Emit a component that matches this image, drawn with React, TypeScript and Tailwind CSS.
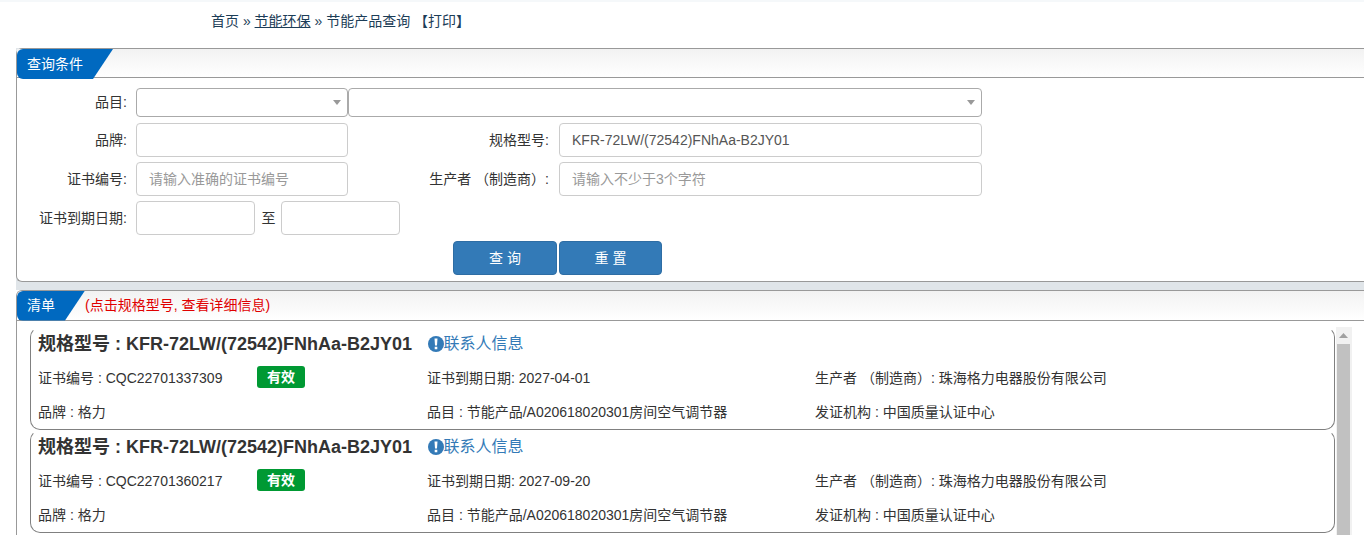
const CJK = "font-['Arial','Liberation_Sans','Noto_Sans_CJK_SC',sans-serif]";

function Arrow() {
  return (
    <svg width="8" height="5" viewBox="0 0 8 5">
      <path d="M0 0h8L4 5z" fill="#999999" />
    </svg>
  );
}

function Tab({ label, w }: { label: string; w: string }) {
  return (
    <div className={`flex items-center h-[30px] shrink-0 bg-[#0069c0] text-white text-[14px] pl-[10px] rounded-l-[6px] ${w} [clip-path:polygon(0_0,100%_0,calc(100%-20px)_100%,0_100%)]`}>
      {label}
    </div>
  );
}

function Label({ children, w = "w-[110px]" }: { children: React.ReactNode; w?: string }) {
  return <div className={`${w} shrink-0 text-right text-[14px] text-[#333] whitespace-pre`}>{children}</div>;
}

function Field({ w, value, placeholder }: { w: string; value?: string; placeholder?: string }) {
  return (
    <div className={`${w} h-[34px] shrink-0 flex items-center border border-[#ccc] rounded-[4px] bg-white px-[12px] text-[14px]`}>
      {value ? <span className="text-[#555]">{value}</span> : <span className="text-[#999]">{placeholder}</span>}
    </div>
  );
}

function Select({ w }: { w: string }) {
  return (
    <div className={`${w} h-[29px] shrink-0 flex items-center justify-end border border-[#aaa] rounded-[4px] bg-white pr-[6px]`}>
      <Arrow />
    </div>
  );
}

function Cell({ w, children }: { w: string; children: React.ReactNode }) {
  return <div className={`${w} shrink-0 flex items-center text-[14px] text-[#333] whitespace-pre`}>{children}</div>;
}

function Card({ cert, date }: { cert: string; date: string }) {
  return (
    <div className="w-[1305px] h-[103px] shrink-0 border border-[#808080] border-t-white rounded-[10px] bg-white pl-[7px]">
      <div className="flex items-center h-[33px]">
        <span className="text-[18px] font-bold text-[#333] whitespace-pre">规格型号 : KFR-72LW/(72542)FNhAa-B2JY01</span>
        <span className="flex items-center ml-[15.5px] -mt-[2px] text-[16px] text-[#337ab7]">
          <svg width="16" height="16" viewBox="0 0 16 16">
            <circle cx="8" cy="8" r="8" fill="#337ab7" />
            <path d="M6.500 2.500h3l-.5 7H7zM6.700 10.700h2.600v2.600H6.700z" fill="#fff" />
          </svg>
          联系人信息
        </span>
      </div>
      <div className="flex h-[34px] items-center">
        <Cell w="w-[219px]">证书编号 : {cert}</Cell>
        <div className="w-[48px] h-[22px] mr-[122px] mb-[2px] shrink-0 flex items-center justify-center rounded-[3px] bg-[#009933] text-white text-[14px] font-bold">有效</div>
        <Cell w="w-[388px]">证书到期日期: {date}</Cell>
        <Cell w="w-[400px]">生产者 （制造商）: 珠海格力电器股份有限公司</Cell>
      </div>
      <div className="flex h-[34px] items-center">
        <Cell w="w-[389px]">品牌 : 格力</Cell>
        <Cell w="w-[388px]">品目 : 节能产品/A020618020301房间空气调节器</Cell>
        <Cell w="w-[400px]">发证机构 : 中国质量认证中心</Cell>
      </div>
    </div>
  );
}

export default function App() {
  return (
    <div className={`w-[1364px] h-[535px] overflow-hidden bg-white ${CJK}`}>
      <div className="h-[2px] bg-[#f5f8fa]" />
      <div className="h-[46px] pl-[211px] pt-[10px] text-[14px] text-[#1c3d57] leading-[18px] whitespace-pre">
        首页 » <span className="underline">节能环保</span> » 节能产品查询 【打印】
      </div>

      <div className="ml-[16px] bg-[#e0e5e9]">
        <div className="h-[234px] border border-[#999] border-r-0 rounded-l-[6px] bg-white">
          <div className="h-[29px] border-b border-[#999] bg-gradient-to-b from-[#f2f2f2] to-white">
            <Tab label="查询条件" w="w-[96px]" />
          </div>
          <div className="pt-[10px]">
            <div className="flex items-center">
              <Label>品目:</Label>
              <div className="w-[9px] shrink-0" />
              <Select w="w-[212px]" />
              <Select w="w-[634px]" />
            </div>
            <div className="flex items-center mt-[6px]">
              <Label>品牌:</Label>
              <div className="w-[9px] shrink-0" />
              <Field w="w-[212px]" />
              <Label w="w-[201px]">规格型号:</Label>
              <div className="w-[10px] shrink-0" />
              <Field w="w-[423px]" value="KFR-72LW/(72542)FNhAa-B2JY01" />
            </div>
            <div className="flex items-center mt-[5px]">
              <Label>证书编号:</Label>
              <div className="w-[9px] shrink-0" />
              <Field w="w-[212px]" placeholder="请输入准确的证书编号" />
              <Label w="w-[201px]">生产者 （制造商）:</Label>
              <div className="w-[10px] shrink-0" />
              <Field w="w-[423px]" placeholder="请输入不少于3个字符" />
            </div>
            <div className="flex items-center mt-[5px]">
              <Label>证书到期日期:</Label>
              <div className="w-[9px] shrink-0" />
              <Field w="w-[119px]" />
              <span className="w-[26px] pl-[1px] text-center text-[14px] text-[#333]">至</span>
              <Field w="w-[119px]" />
            </div>
            <div className="flex mt-[6px] ml-[436px] gap-[2px]">
              <div className="w-[104px] h-[34px] flex items-center justify-center rounded-[4px] bg-[#337ab7] border border-[#2e6da4] text-white text-[14px] whitespace-pre">查 询</div>
              <div className="w-[103px] h-[34px] flex items-center justify-center rounded-[4px] bg-[#337ab7] border border-[#2e6da4] text-white text-[14px] whitespace-pre">重 置</div>
            </div>
          </div>
        </div>
        <div className="h-[8px]" />
      </div>

      <div className="ml-[16px] h-[245px] border-t border-l border-[#999] rounded-tl-[6px] overflow-hidden">
        <div className="flex items-center h-[30px] border-b border-[#999] bg-gradient-to-b from-[#f2f2f2] to-white">
          <Tab label="清单" w="w-[68px]" />
          <span className="text-[14px] text-[#e00000] whitespace-pre">(点击规格型号, 查看详细信息)</span>
        </div>
        <div className="flex pl-[13px] pt-[6px]">
          <div className="flex flex-col w-[1305px]">
            <Card cert="CQC22701337309" date="2027-04-01" />
            <Card cert="CQC22701360217" date="2027-09-20" />
            <div className="w-[1305px] h-[40px] shrink-0 border border-[#808080] border-t-white rounded-[10px]" />
          </div>
          <div className="w-[16px] ml-[1px] pl-[1px] flex flex-col bg-[#f1f1f1] items-start shrink-0 h-[300px]">
            <div className="h-[17px] w-[13px] flex items-center justify-center">
              <svg width="9" height="5" viewBox="0 0 9 5"><path d="M0 5h9L4.500 0z" fill="#a0a0a0" /></svg>
            </div>
            <div className="w-[13px] flex-1 bg-[#c1c1c1]" />
          </div>
        </div>
      </div>
    </div>
  );
}
